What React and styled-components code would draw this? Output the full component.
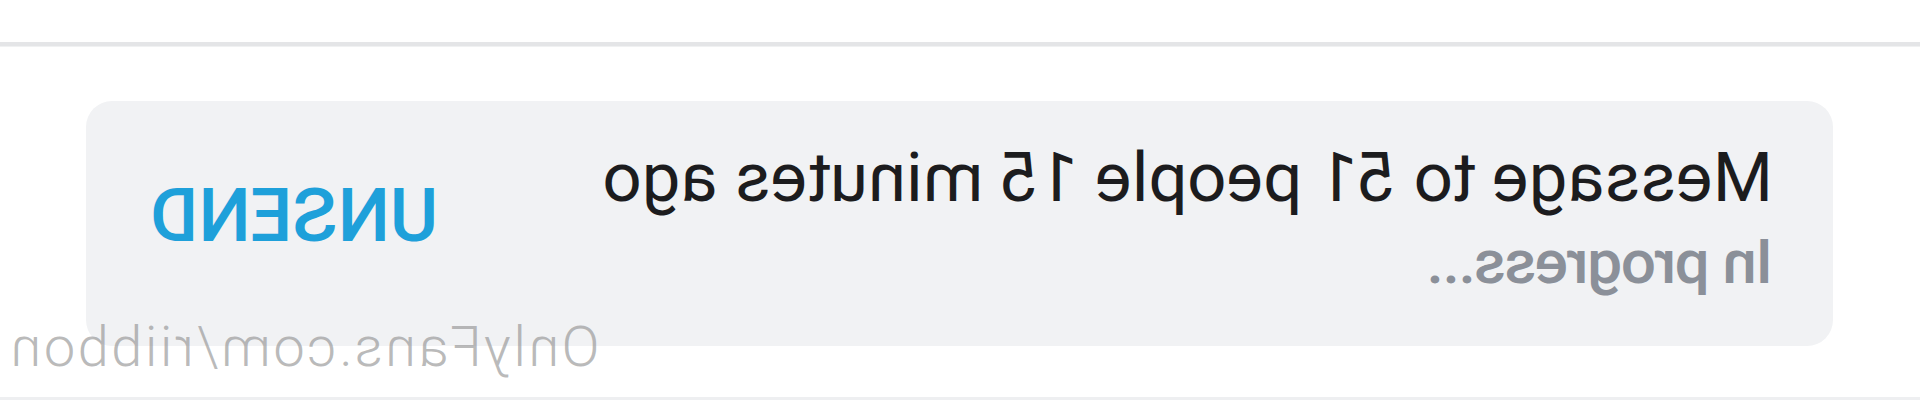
import React from "react";
import styled, { createGlobalStyle } from "styled-components";

const GlobalStyle = createGlobalStyle`
    html, body {
        margin: 0;
        padding: 0;
        background: #ffffff;
    }
    body {
        font-family: Roboto, "Liberation Sans", Arial, sans-serif;
    }
`;

// the whole screenshot is mirrored, so the page is flipped as one piece
const Page = styled.div`
    position: relative;
    width: 1920px;
    height: 400px;
    overflow: hidden;
    background: #ffffff;
    transform: scaleX(-1);
    display: flex;
    flex-direction: column;
`;

const TopBar = styled.div`
    height: 42px;
    flex-shrink: 0;
`;

const Divider = styled.div`
    height: 4px;
    flex-shrink: 0;
    background: #e4e5e7;
    border-bottom: 1px solid #f0f1f2;
`;

const Card = styled.div`
    margin: 54px 86px 0 87px;
    height: 245px;
    box-sizing: border-box;
    padding: 37px 64px 0 60px;
    border-radius: 26px;
    background-color: #f1f2f4;
    display: flex;
    justify-content: space-between;
    align-items: flex-start;
`;

const Info = styled.div`
    display: flex;
    flex-direction: column;
`;

const Title = styled.div`
    font-family: Roboto, sans-serif;
    font-size: 69px;
    line-height: 80px;
    font-weight: 400;
    color: #1c1c1e;
    white-space: nowrap;
`;

const Status = styled.div`
    margin-top: 11px;
    font-family: Roboto, sans-serif;
    font-size: 62px;
    line-height: 66px;
    font-weight: 500;
    letter-spacing: -1.3px;
    color: #8b9099;
    white-space: nowrap;
`;

const UnsendButton = styled.button`
    margin-top: 38px;
    padding: 0;
    border: none;
    background: none;
    font-family: Roboto, sans-serif;
    font-size: 74px;
    line-height: 80px;
    font-weight: 500;
    color: #1ea0da;
    cursor: pointer;
`;

const BottomLine = styled.div`
    margin-top: auto;
    height: 3px;
    background: #eeeff1;
`;

const Watermark = styled.div`
    position: absolute;
    top: 317px;
    right: 8px;
    font-family: Roboto, sans-serif;
    font-size: 56px;
    line-height: 60px;
    font-weight: 300;
    letter-spacing: 2.5px;
    color: rgba(140, 140, 140, 0.6);
    white-space: nowrap;
`;

const App = () => {
    return (
        <>
            <GlobalStyle />
            <Page>
                <TopBar />
                <Divider />
                <Card>
                    <Info>
                        <Title>Message to 51 people 15 minutes ago</Title>
                        <Status>In progress...</Status>
                    </Info>
                    <UnsendButton>UNSEND</UnsendButton>
                </Card>
                <BottomLine />
                <Watermark>OnlyFans.com/riibbon</Watermark>
            </Page>
        </>
    );
};

export default App;
